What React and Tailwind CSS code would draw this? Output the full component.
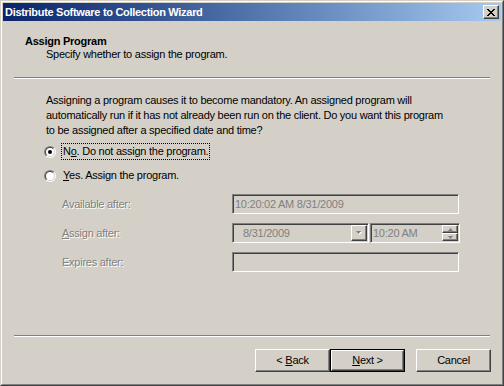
import React from "react";

const raised =
  "border border-t-white border-l-white border-r-[#404040] border-b-[#404040] shadow-[inset_-1px_-1px_0_#808080]";
const sunken =
  "border border-t-[#808080] border-l-[#808080] border-b-white border-r-white shadow-[inset_1px_1px_0_#404040]";
const disabledText = "text-[#808080] [text-shadow:1px_1px_0_#ffffff]";

function Radio({ checked }) {
  return (
    <div className="w-[12px] h-[12px] rounded-full border border-t-[#808080] border-l-[#808080] border-b-white border-r-white shrink-0">
      <div className="w-full h-full rounded-full border border-t-[#404040] border-l-[#404040] border-b-[#d4d0c8] border-r-[#d4d0c8] bg-white flex items-center justify-center">
        {checked && <div className="w-[4px] h-[4px] rounded-full bg-black" />}
      </div>
    </div>
  );
}

function Separator() {
  return (
    <div className="mx-[11px]">
      <div className="h-px bg-[#808080]" />
      <div className="h-px bg-white" />
    </div>
  );
}

function Button({ children, isDefault }) {
  const inner = (
    <div className={`w-full h-full flex items-center justify-center ${raised}`}>
      {children}
    </div>
  );
  if (isDefault) {
    return <div className="w-[75px] h-[23px] border border-black">{inner}</div>;
  }
  return <div className="w-[75px] h-[23px]">{inner}</div>;
}

export default function App() {
  return (
    <div className="w-[504px] h-[386px] border border-t-[#d4d0c8] border-l-[#d4d0c8] border-r-[#404040] border-b-[#404040] bg-[#d4d0c8] font-['Liberation_Sans',Arial,sans-serif] text-[11px] leading-[13px] tracking-[-0.25px] text-black">
      <div className="w-full h-full border border-t-white border-l-white border-r-[#808080] border-b-[#808080] p-px flex flex-col">
        {/* Title bar */}
        <div className="h-[18px] shrink-0 bg-gradient-to-r from-[#0a246a] to-[#a6caf0] flex items-center pl-[2px] pr-[2px]">
          <span className="text-white font-bold text-[11px] leading-[13px] tracking-[-0.3px] flex-1">
            Distribute Software to Collection Wizard
          </span>
          <div className={`w-[16px] h-[14px] bg-[#d4d0c8] flex items-center justify-center ${raised}`}>
            <svg width="8" height="7" viewBox="0 0 8 7">
              <path d="M0 0h2v1h1v1h2v-1h1v-1h2v1h-1v1h-1v1h-1v1h1v1h1v1h1v1h-2v-1h-1v-1h-2v1h-1v1h-2v-1h1v-1h1v-1h1v-1h-1v-1h-1v-1h-1z" fill="#000" />
            </svg>
          </div>
        </div>

        {/* Header */}
        <div className="h-[56px] shrink-0 pt-[14px]">
          <div className="pl-[22px] font-bold">Assign Program</div>
          <div className="pl-[43px]">Specify whether to assign the program.</div>
        </div>
        <Separator />

        {/* Content */}
        <div className="pl-[43px] mt-[14px]">
          <p className="leading-[15px]">
            Assigning a program causes it to become mandatory. An assigned program will
            <br />
            automatically run if it has not already been run on the client. Do you want this program
            <br />
            to be assigned after a specified date and time?
          </p>
        </div>

        <div className="pl-[41px] mt-[5px] flex items-center h-[17px]">
          <Radio checked />
          <div className="ml-[5px] border border-dotted border-black px-px h-[17px] flex items-center">
            <span>
              N<span className="underline">o</span>. Do not assign the program.
            </span>
          </div>
        </div>
        <div className="pl-[41px] mt-[7px] flex items-center h-[17px]">
          <Radio />
          <div className="ml-[6px] px-px">
            <span className="underline">Y</span>es. Assign the program.
          </div>
        </div>

        {/* Form rows */}
        <div className="pl-[59px] mt-[10px] flex flex-col gap-[9px]">
          <div className="flex items-center h-[20px]">
            <div className={`w-[170px] ${disabledText}`}>Available after:</div>
            <div className={`w-[227px] h-[20px] ${sunken} flex items-center pl-[2px] text-[#808080]`}>
              10:20:02 AM 8/31/2009
            </div>
          </div>
          <div className="flex items-center h-[20px]">
            <div className={`w-[170px] ${disabledText}`}>
              <span className="underline">A</span>ssign after:
            </div>
            <div className={`w-[137px] h-[20px] ${sunken} flex items-center pl-[10px] pr-[1px] text-[#808080]`}>
              <span className="flex-1">8/31/2009</span>
              <div className={`w-[16px] h-[16px] flex items-center justify-center ${raised}`}>
                <svg width="7" height="5" viewBox="0 0 7 5">
                  <path d="M1 1h5l-2.5 3z" fill="#ffffff" />
                  <path d="M0 0h5l-2.5 3z" fill="#808080" />
                </svg>
              </div>
            </div>
            <div className={`ml-px w-[90px] h-[20px] ${sunken} flex items-center pl-[2px] pr-px text-[#808080]`}>
              <span className="flex-1">10:20 AM</span>
              <div className="flex flex-col w-[16px] h-[16px]">
                <div className={`h-[8px] flex items-center justify-center ${raised}`}>
                  <svg width="5" height="3" viewBox="0 0 5 3">
                    <path d="M2.5 0l2.5 3h-5z" fill="#808080" />
                  </svg>
                </div>
                <div className={`h-[8px] flex items-center justify-center ${raised}`}>
                  <svg width="5" height="3" viewBox="0 0 5 3">
                    <path d="M0 0h5l-2.5 3z" fill="#808080" />
                  </svg>
                </div>
              </div>
            </div>
          </div>
          <div className="flex items-center h-[20px]">
            <div className={`w-[170px] ${disabledText}`}>Expires after:</div>
            <div className={`w-[227px] h-[20px] ${sunken}`} />
          </div>
        </div>

        {/* Bottom */}
        <div className="mt-auto">
          <Separator />
          <div className="flex justify-end pr-[10px] mt-[12px] mb-[11px]">
            <Button>
              &lt; <span className="underline ml-[3px]">B</span>ack
            </Button>
            <Button isDefault>
              <span className="underline">N</span>ext &gt;
            </Button>
            <div className="w-[11px]" />
            <Button>Cancel</Button>
          </div>
        </div>
      </div>
    </div>
  );
}
